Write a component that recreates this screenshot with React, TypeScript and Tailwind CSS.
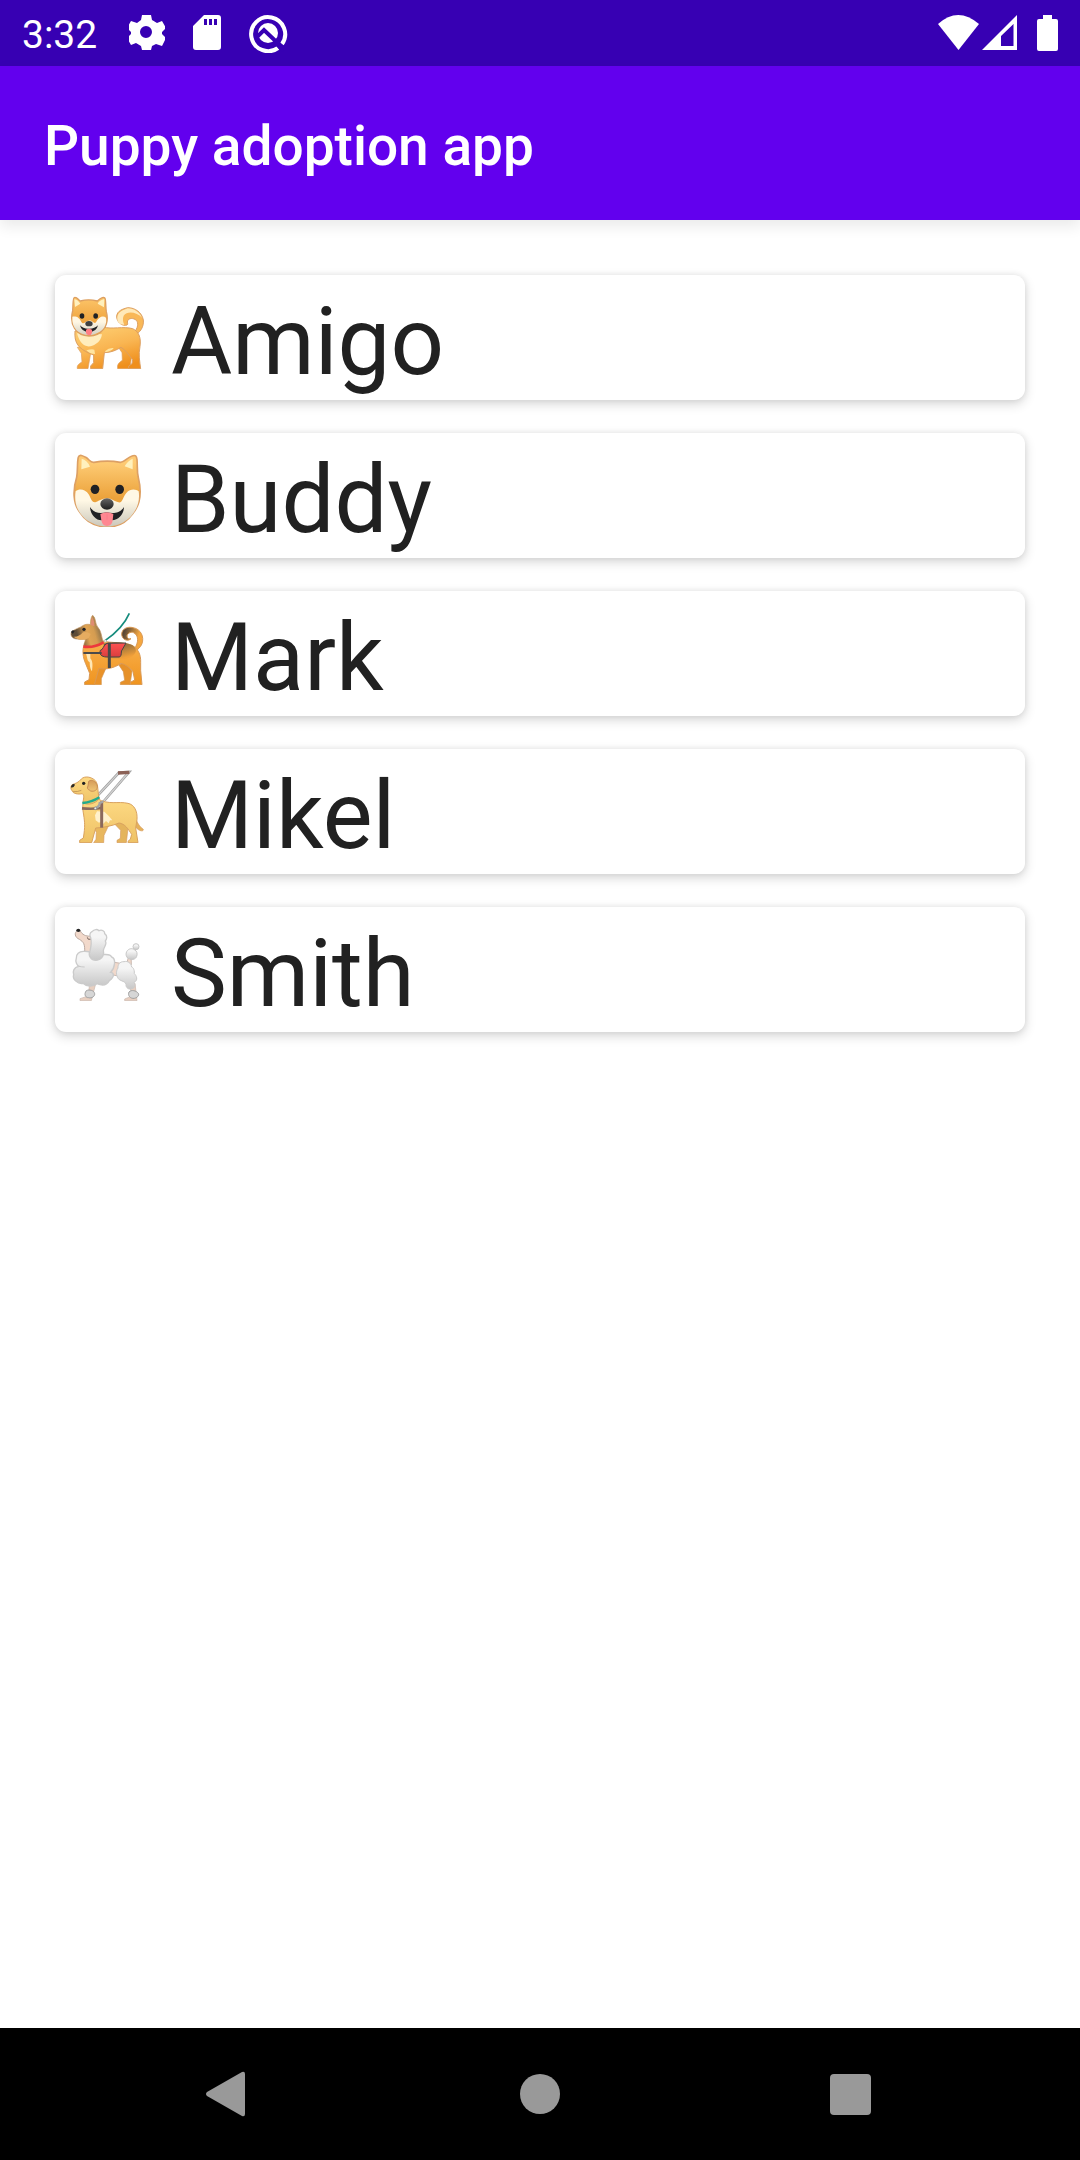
import React from "react";

function ShibaIcon() {
  return (
    <svg viewBox="30 30 225 222" className="h-[74px] w-[75px] shrink-0" role="img" aria-label="Standing dog">
      <defs>
        <linearGradient id="shibaBody" gradientUnits="userSpaceOnUse" x1="130" y1="120" x2="165" y2="250">
          <stop offset="0.1" stopColor="#fcc86a" />
          <stop offset="0.5" stopColor="#f9b552" />
          <stop offset="1" stopColor="#ef8f1c" />
        </linearGradient>
        <linearGradient id="shibaHead" x1="0" y1="0" x2="0" y2="1">
          <stop offset="0" stopColor="#fcc56a" />
          <stop offset="0.6" stopColor="#f0a640" />
        </linearGradient>
        <linearGradient id="shibaFace" x1="0" y1="0" x2="0" y2="1">
          <stop offset="0.3" stopColor="#fff7e4" />
          <stop offset="1" stopColor="#d3cfc2" />
        </linearGradient>
      </defs>
      <path d="M222 142C234 130 236 114 229 106C220 98 207 99 203 107C200 113 206 117 201 120C188 125 169 112 170 93C172 77 188 72 203 68C226 68 246 83 250 105C252 122 243 139 231 146Z" fill="#f9b857" stroke="#dc9f61" strokeWidth="3" />
      <path d="M172 103C170 84 184 77 203 70C222 70 239 82 246 98C232 82 202 76 191 92C187 101 189 112 193 119C181 120 173 113 172 103Z" fill="#ffe9b8" />
      <path d="M173 183L186 203L187 226C175 234 171 240 173 251H209L217 203L198 181Z" fill="url(#shibaBody)" stroke="#dc9f61" strokeWidth="2" />
      <path d="M52 187L64 205L66 231C53 238 51 243 52 251H84L92 205L85 183Z" fill="url(#shibaBody)" stroke="#dc9f61" strokeWidth="2" />
      <path d="M45 138C42 175 56 190 88 205L101 210V233L92 243V251H128L133 203C153 203 170 195 183 187C198 195 205 210 218 224L216 236L206 243V251H242C239 229 235 209 240 184C244 156 235 139 218 131C189 123 156 134 129 126Z" fill="url(#shibaBody)" stroke="#dc9f61" strokeWidth="3" />
      <path d="M51 145C61 184 84 193 108 176C119 170 124 161 126 148Z" fill="#ffedbd" />
      <path d="M79 196Q96 191 103 194L105 207Q89 207 79 196Z" fill="#ffe5a0" />
      <path d="M135 199Q147 187 161 189Q155 198 137 202Z" fill="#ffe5a0" />
      <path d="M38 77C40 52 38 37 44 37C52 36 56 46 61 48C79 43 96 44 112 48C122 39 134 32 136 43C138 57 137 70 139 80C150 120 125 153 87 153C48 153 27 118 38 77Z" fill="url(#shibaHead)" stroke="#dc9f61" strokeWidth="4" />
      <path d="M43 43Q52 43 61 56L45 66ZM133 42Q118 46 113 56L132 67Z" fill="#fff0bd" />
      <path d="M37 95C46 93 57 94 64 111C71 122 77 106 87 107C97 105 102 119 108 112C116 94 130 91 138 98C143 127 119 149 87 150C57 149 34 130 37 95Z" fill="url(#shibaFace)" />
      <ellipse cx="66" cy="93" rx="7" ry="8" fill="#202124" />
      <ellipse cx="107" cy="93" rx="7" ry="8" fill="#202124" />
      <path d="M60 121Q70 132 86 131Q103 132 114 121Q110 140 87 142Q64 140 60 121Z" fill="#202124" />
      <ellipse cx="87" cy="116" rx="11" ry="8" fill="#3f4142" />
      <path d="M78 134Q86 129 96 134L96 143Q94 151 87 151Q79 150 78 143Z" fill="#ff7d83" />
    </svg>
  );
}

function DogFaceIcon() {
  return (
    <svg viewBox="30 30 225 222" className="h-[74px] w-[75px] shrink-0" role="img" aria-label="Dog face">
      <defs>
        <linearGradient id="faceFur" x1="0" y1="0" x2="0" y2="1">
          <stop offset="0.1" stopColor="#fecb74" />
          <stop offset="0.6" stopColor="#eba23b" />
        </linearGradient>
        <linearGradient id="faceMuzzle" x1="0" y1="0" x2="0" y2="1">
          <stop offset="0.3" stopColor="#fff8e5" />
          <stop offset="1" stopColor="#cbc8bc" />
        </linearGradient>
        <linearGradient id="faceNose" x1="0" y1="0" x2="0" y2="1">
          <stop offset="0.1" stopColor="#5e5e5e" />
          <stop offset="0.9" stopColor="#262626" />
        </linearGradient>
      </defs>
      <path d="M50 103C54 81 51 58 55 43C58 32 70 39 77 43C88 49 91 60 102 58Q142 51 181 58C193 58 203 43 216 39C226 35 230 39 231 50C233 69 230 84 235 104C247 153 239 187 218 212C197 241 169 252 141 252C108 251 79 238 59 207C39 181 38 141 50 103Z" fill="url(#faceFur)" stroke="#dda064" strokeWidth="5" />
      <path d="M65 47Q82 51 90 71L64 79ZM218 47L218 79L194 70Q203 53 218 47Z" fill="#fff1bd" />
      <path d="M47 144C57 137 75 136 87 155C94 170 97 180 108 177C119 173 126 167 141 166C156 167 163 175 175 178C189 181 188 161 199 150C211 136 228 138 236 145C242 184 222 213 204 228C163 262 110 254 75 227C49 203 42 175 47 144Z" fill="url(#faceMuzzle)" />
      <ellipse cx="105" cy="139" rx="13" ry="14" fill="#202124" />
      <ellipse cx="179" cy="139" rx="13" ry="14" fill="#202124" />
      <path d="M90 192C104 213 122 212 140 208C159 212 179 212 192 192C191 216 175 231 156 232H124C108 232 91 215 90 192Z" fill="#202124" />
      <ellipse cx="141" cy="183" rx="20" ry="17" fill="url(#faceNose)" />
      <path d="M121 213Q140 203 160 213L158 232C157 243 151 249 141 249S126 243 124 232Z" fill="#ff8791" />
      <path d="M141 214V230" stroke="#f47885" strokeWidth="2" />
    </svg>
  );
}

function ServiceDogIcon() {
  return (
    <svg viewBox="30 30 225 222" className="h-[74px] w-[75px] shrink-0" role="img" aria-label="Service dog">
      <defs>
        <linearGradient id="serviceBody" x1="0" y1="0" x2="0" y2="1">
          <stop offset="0" stopColor="#f9b04c" />
          <stop offset="1" stopColor="#ef941f" />
        </linearGradient>
        <linearGradient id="serviceTail" x1="0" y1="0.2" x2="1" y2="0.6">
          <stop offset="0.1" stopColor="#594735" />
          <stop offset="0.75" stopColor="#f5a740" />
        </linearGradient>
        <linearGradient id="serviceSaddle" x1="0" y1="0" x2="0.5" y2="1">
          <stop offset="0.2" stopColor="#78603f" />
          <stop offset="1" stopColor="#f2a039" />
        </linearGradient>
        <linearGradient id="serviceHead" x1="0" y1="0.3" x2="1" y2="0">
          <stop offset="0.1" stopColor="#5d4b36" />
          <stop offset="0.4" stopColor="#e0a454" />
          <stop offset="0.6" stopColor="#d49c51" />
          <stop offset="0.85" stopColor="#7b6849" />
        </linearGradient>
        <linearGradient id="serviceVest" x1="0" y1="0" x2="0" y2="1">
          <stop offset="0" stopColor="#ff5252" />
          <stop offset="1" stopColor="#d93e3e" />
        </linearGradient>
      </defs>
      <path d="M224 142C236 125 235 105 225 98C216 89 202 96 201 105C202 112 207 115 213 113C201 124 185 114 185 99C186 82 204 76 219 80C243 84 253 108 246 128C240 142 229 149 220 152Z" fill="url(#serviceTail)" stroke="#d99955" strokeWidth="3" />
      <path d="M99 193L105 217L99 242L96 251H124V233L140 197Z" fill="#e99228" stroke="#d39552" strokeWidth="2" />
      <path d="M176 191L190 212L194 238L181 244V251H210L216 211L198 184Z" fill="#e69129" stroke="#d39552" strokeWidth="2" />
      <path d="M74 129C65 145 69 171 77 188L89 217L87 236L74 243V251H103L117 202C138 207 163 201 183 187C196 190 211 201 219 212L224 237L211 244V251H246L242 209L242 184C243 159 233 142 216 133C187 122 155 127 128 120Z" fill="url(#serviceBody)" stroke="#d99955" strokeWidth="3" />
      <path d="M131 128C157 122 189 121 216 132C228 139 231 151 224 158C211 178 179 175 154 172L132 155Z" fill="url(#serviceSaddle)" />
      <path d="M77 157C83 168 80 179 89 184C89 197 92 207 96 211C98 193 99 182 91 172L91 155Z" fill="#ffe7b4" />
      <path d="M35 92C44 84 61 80 68 74C77 69 85 69 91 71C91 59 94 45 98 43C108 49 105 69 113 78C124 88 124 108 130 123C115 140 90 144 72 136C70 125 78 122 75 114C60 115 44 116 37 109C32 103 32 97 35 92Z" fill="url(#serviceHead)" stroke="#c29664" strokeWidth="2" />
      <path d="M92 72L96 48C101 57 104 64 103 76Z" fill="#df8c73" />
      <path d="M40 107Q56 109 69 94Q80 90 92 99L86 111L75 116Q53 118 40 107Z" fill="#e6ac60" />
      <ellipse cx="72" cy="85" rx="5" ry="5" fill="#202124" />
      <path d="M33 93Q37 85 44 90L39 98Q35 98 33 93Z" fill="#252525" />
      <path d="M136 118C168 96 195 67 208 37" fill="none" stroke="#168c7d" strokeWidth="5" />
      <path d="M70 137Q102 141 131 124" fill="none" stroke="#ee383c" strokeWidth="8" />
      <path d="M121 148C130 147 129 133 141 127L198 126L188 144C180 151 188 162 179 168H139C124 167 117 160 121 148Z" fill="url(#serviceVest)" stroke="#444" strokeWidth="3" />
      <path d="M70 156H125" stroke="#4b4b4b" strokeWidth="6" />
      <path d="M148 125V201" stroke="#494949" strokeWidth="9" />
      <circle cx="136" cy="120" r="4" fill="#e5eee9" stroke="#7b8582" />
    </svg>
  );
}

function GuideDogIcon() {
  return (
    <svg viewBox="30 30 225 222" className="h-[74px] w-[75px] shrink-0" role="img" aria-label="Guide dog">
      <defs>
        <linearGradient id="guideBody" x1="0" y1="0" x2="0" y2="1">
          <stop offset="0.1" stopColor="#fcd780" />
          <stop offset="1" stopColor="#eec266" />
        </linearGradient>
        <linearGradient id="guideEar" x1="0" y1="0" x2="0" y2="1">
          <stop offset="0" stopColor="#d59b59" />
          <stop offset="1" stopColor="#efc675" />
        </linearGradient>
      </defs>
      <path d="M105 118L177 41L207 39L119 141" fill="none" stroke="#9c9c9c" strokeWidth="8" />
      <path d="M105 118L177 41L207 39L119 141" fill="none" stroke="#d1d1d1" strokeWidth="4" />
      <path d="M174 42L208 40" stroke="#8b6156" strokeWidth="10" />
      <path d="M221 165C228 180 233 199 250 211C251 220 234 215 226 203L213 174Z" fill="#e5b159" stroke="#d69c61" strokeWidth="2" />
      <path d="M98 198L109 220L108 241L101 251H131L132 229L148 195Z" fill="#e8b75e" stroke="#d69c61" strokeWidth="2" />
      <path d="M163 194L182 214L181 238L171 244V251H199L204 208L190 188Z" fill="#e4b45c" stroke="#d69c61" strokeWidth="2" />
      <path d="M73 123C66 136 68 151 71 168C74 189 76 202 70 237L59 244V251H95L107 207C130 206 159 200 177 192C195 194 205 211 215 226L211 241L204 247V251H234L227 207L231 182C233 157 223 137 204 133C175 126 144 139 113 119Z" fill="url(#guideBody)" stroke="#d9a25f" strokeWidth="3" />
      <path d="M36 77C45 74 57 70 64 60C74 50 94 53 106 65C116 76 112 99 118 119C105 135 84 139 69 132C69 121 75 111 67 104C54 107 39 104 36 95C31 90 32 81 36 77Z" fill="url(#guideBody)" stroke="#d9a25f" strokeWidth="3" />
      <path d="M86 67C95 59 108 67 112 81C113 92 104 99 92 96C86 91 79 91 84 81Z" fill="url(#guideEar)" stroke="#c98e55" strokeWidth="3" />
      <path d="M39 98Q53 99 64 94" fill="none" stroke="#b4854b" strokeWidth="2" />
      <circle cx="71" cy="73" r="5" fill="#222" />
      <path d="M33 82Q39 71 45 77Q43 85 34 86Z" fill="#282828" />
      <path d="M67 132Q96 130 118 115" fill="none" stroke="#20ab8d" strokeWidth="7" />
      <path d="M111 157L105 169L107 184L117 191L125 187L129 195L138 186L146 193L150 184L157 184L147 172L133 158Z" fill="#fff1cc" />
      <path d="M66 148Q96 151 128 147" fill="none" stroke="#8b695c" strokeWidth="8" />
      <path d="M125 127V206" stroke="#8b695c" strokeWidth="9" />
      <path d="M106 147Q119 143 119 132L130 128" fill="none" stroke="#a5a5a5" strokeWidth="7" />
      <circle cx="106" cy="148" r="4" fill="#eee" stroke="#777" strokeWidth="2" />
    </svg>
  );
}

function PoodleIcon() {
  return (
    <svg viewBox="30 30 225 222" className="h-[74px] w-[75px] shrink-0" role="img" aria-label="Poodle">
      <defs>
        <linearGradient id="poodleFur" x1="0" y1="0" x2="0" y2="1">
          <stop offset="0.25" stopColor="#f5f5f5" />
          <stop offset="1" stopColor="#c7c7c7" />
        </linearGradient>
      </defs>
      <path d="M89 202L84 237L60 245V251H94L106 204ZM208 207L218 236L194 246V251H231L225 199Z" fill="#e8cfc0" stroke="#c9b7ae" strokeWidth="2" />
      <path d="M207 116L199 142L158 135L151 169Q169 182 184 170L214 143L213 113Z" fill="#f1d9cb" stroke="#cbb9b0" strokeWidth="3" />
      <path d="M52 41C42 47 44 61 58 67C71 75 75 80 74 108L99 116L106 79L91 57C77 59 66 52 61 42Z" fill="#f2d9cb" stroke="#bba9a0" strokeWidth="3" />
      <path d="M72 103C57 102 48 113 49 123C45 134 51 145 57 148C40 151 38 165 41 173C36 187 54 202 69 199C82 212 101 208 111 200C127 207 141 204 148 191C166 178 161 167 152 166C165 153 169 125 155 120C150 107 130 115 123 112C110 117 95 101 72 103Z" fill="url(#poodleFur)" stroke="#cbcbcb" strokeWidth="4" />
      <path d="M57 148Q65 150 74 150" fill="none" stroke="#c8c8c8" strokeWidth="3" />
      <path d="M96 44C103 35 113 37 117 41C126 36 135 44 134 50C144 57 140 67 136 72C143 81 130 91 130 101C134 118 120 131 107 130C94 130 83 116 90 102C93 90 95 74 92 62C88 55 89 47 96 44Z" fill="url(#poodleFur)" stroke="#cbcbcb" strokeWidth="4" />
      <path d="M82 61Q82 69 91 67" fill="none" stroke="#7b6861" strokeWidth="3" />
      <ellipse cx="55" cy="40" rx="6" ry="5" fill="#222" />
      <path d="M192 134C179 133 173 144 174 153C166 165 169 180 178 188C189 194 197 194 198 202C197 213 207 219 216 215C225 213 227 205 222 196C236 190 229 175 223 170C224 156 218 151 215 150C213 138 204 131 192 134Z" fill="url(#poodleFur)" stroke="#cbcbcb" strokeWidth="3" />
      <path d="M202 101C206 96 215 92 223 98C231 101 233 111 230 118C228 126 217 130 209 126C198 124 195 109 202 101Z" fill="url(#poodleFur)" stroke="#c7c7c7" strokeWidth="3" />
      <circle cx="228" cy="89" r="9" fill="url(#poodleFur)" stroke="#c7c7c7" strokeWidth="3" />
      <path d="M79 221C87 217 102 219 104 230C105 238 95 245 86 242C78 243 70 233 79 221ZM207 225C214 217 229 221 235 229C239 236 230 243 223 244C211 246 202 235 207 225Z" fill="#d6d6d6" stroke="#a0a0a0" strokeWidth="3" />
    </svg>
  );
}

const puppies = [
  { name: "Amigo", Icon: ShibaIcon },
  { name: "Buddy", Icon: DogFaceIcon },
  { name: "Mark", Icon: ServiceDogIcon },
  { name: "Mikel", Icon: GuideDogIcon },
  { name: "Smith", Icon: PoodleIcon },
];

function StatusBar() {
  return (
    <div className="flex h-[66px] items-center justify-between bg-[#3700b3] px-[22px] text-white">
      <div className="flex items-center">
        <span className="w-[107px] pt-1 text-[39px] leading-[62px]">3:32</span>
        <svg viewBox="129 16 36 36" className="h-9 w-9" fill="currentColor" aria-hidden="true">
          <path fillRule="evenodd" d="M142 16h9l1 5 5 3 5-2 4 7-4 4v2l4 4-4 8-6-2-4 2-1 4h-9l-1-4-5-3-5 2-4-7 4-4v-2l-4-4 4-7 6 2 4-3ZM146 27a6 6 0 1 0 0 12a6 6 0 1 0 0-12Z" />
        </svg>
        <svg viewBox="193 16 29 36" className="ml-7 h-9 w-[29px]" fill="currentColor" aria-hidden="true">
          <path fillRule="evenodd" d="M204 16h14q3 0 3 3v29q0 3-3 3h-22q-3 0-3-3V27ZM204 20v6h3v-6ZM209 20v6h3v-6ZM214 20v6h3v-6Z" />
        </svg>
        <svg viewBox="249 14 39 39" className="ml-[27px] h-[39px] w-[39px]" fill="none" aria-hidden="true">
          <path d="M278 48A17 17 0 1 1 282 44" stroke="currentColor" strokeWidth="4" />
          <circle cx="268" cy="33" r="10" fill="currentColor" />
          <path d="M257 37L264 30L285 50" stroke="#3700b3" strokeWidth="4" />
          <path d="M274 42L283 51" stroke="#3700b3" strokeWidth="3" />
        </svg>
      </div>
      <svg viewBox="938 14 120 38" className="h-[38px] w-[120px]" fill="currentColor" aria-hidden="true">
        <path d="M938 24Q958 6 979 24L958.5 50Z" />
        <path fillRule="evenodd" d="M982 50L1017 15V50ZM1001 46H1013.5V24L1001 36Z" />
        <path d="M1043 15h9v4h4q2 0 2 2v28q0 2-2 2h-17q-2 0-2-2V21q0-2 2-2h4Z" />
      </svg>
    </div>
  );
}

function NavigationBar() {
  return (
    <nav className="flex h-[132px] items-center justify-center gap-[246px] bg-black text-[#999]">
      <button type="button" aria-label="Back" className="flex h-16 w-16 items-center justify-start pl-2">
        <svg viewBox="0 0 40 46" className="h-[46px] w-10" fill="currentColor" aria-hidden="true">
          <path d="M36 1Q39 0 39 3V43Q39 46 36 45L1 25Q-1 23 1 21Z" />
        </svg>
      </button>
      <button type="button" aria-label="Home" className="flex h-16 w-16 items-center justify-center">
        <span className="h-10 w-10 rounded-full bg-[#999]" />
      </button>
      <button type="button" aria-label="Recent apps" className="flex h-16 w-16 items-center justify-center">
        <span className="h-[41px] w-[41px] rounded-[4px] bg-[#999]" />
      </button>
    </nav>
  );
}

export default function App() {
  return (
    <div className="flex min-h-screen flex-col bg-white font-['Roboto',sans-serif]">
      <StatusBar />
      <header className="flex h-[154px] items-center bg-[#6200ee] px-[44px] shadow-[0_6px_14px_rgba(0,0,0,0.09)]">
        <h1 className="pt-[6px] text-[55px] leading-[66px] font-medium text-white">Puppy adoption app</h1>
      </header>
      <main className="flex-1 p-[55px]">
        <ul className="flex flex-col gap-[33px]">
          {puppies.map(({ name, Icon }) => (
            <li key={name}>
              <button
                type="button"
                className="flex w-full items-start gap-[26px] rounded-[11px] bg-white pl-[15px] text-left shadow-[0_4px_12px_rgba(0,0,0,0.16),0_0_6px_rgba(0,0,0,0.08)]"
              >
                <span className="pt-5">
                  <Icon />
                </span>
                <span className="pt-[10px] text-[94px] leading-[115px] text-[#212121]">{name}</span>
              </button>
            </li>
          ))}
        </ul>
      </main>
      <NavigationBar />
    </div>
  );
}
